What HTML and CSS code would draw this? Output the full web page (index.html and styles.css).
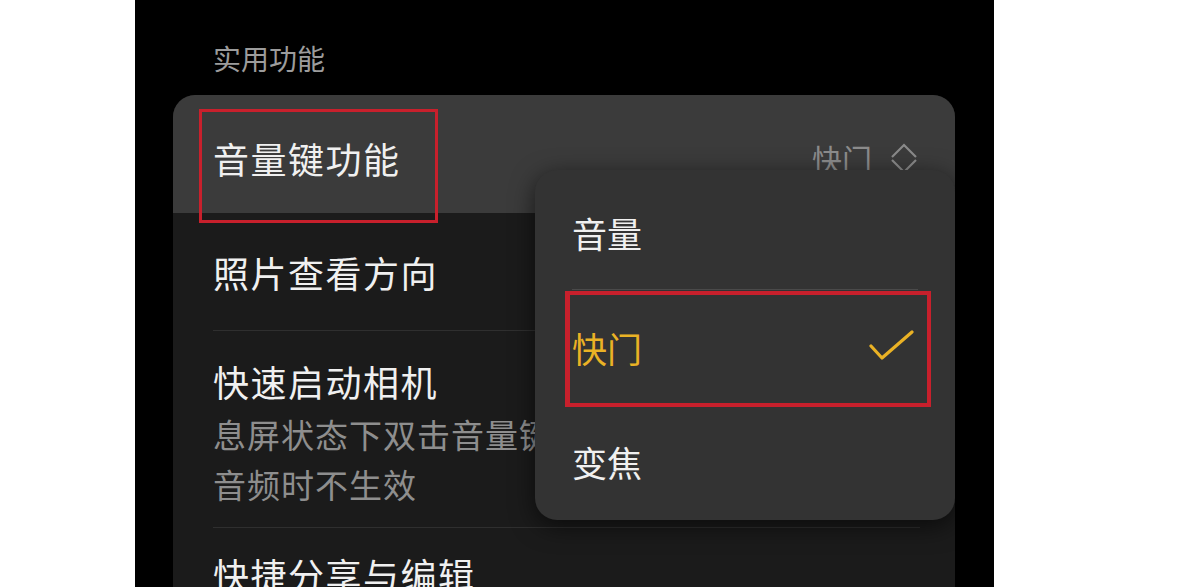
FILE: index.html
```html
<!DOCTYPE html>
<html lang="zh-CN">
<head>
<meta charset="utf-8">
<link rel="stylesheet" href="styles.css">
</head>
<body>
<div class="phone">
  <div class="section-title">实用功能</div>
  <div class="card">
    <div class="row row-active">
      <span class="row-title">音量键功能</span>
      <span class="row-value">快门
        <svg class="updown" viewBox="0 0 28 32" width="28" height="32"><path d="M2 15 L14 3 L26 15" /><path d="M2 18 L14 30 L26 18" /></svg>
      </span>
    </div>
    <div class="row row-plain">
      <span class="row-title">照片查看方向</span>
    </div>
    <div class="divider"></div>
    <div class="row row-multi">
      <div class="row-title">快速启动相机</div>
      <div class="row-sub"><span class="sub-line clipped">息屏状态下双击音量键快速启动相机，播放</span><span class="sub-line">音频时不生效</span></div>
    </div>
    <div class="divider"></div>
    <div class="row row-last">
      <span class="row-title">快捷分享与编辑</span>
    </div>
  </div>

  <div class="menu">
    <div class="menu-item">音量</div>
    <div class="menu-divider"></div>
    <div class="menu-item selected">快门
      <svg class="check" viewBox="0 0 46 34" width="46" height="34"><path d="M2 16 L13 28 L43 2" /></svg>
    </div>
    <div class="menu-item">变焦</div>
  </div>

  <div class="mark mark-1"></div>
  <div class="mark mark-2"></div>
</div>
</body>
</html>
```

FILE: styles.css
```css
html, body {
  margin: 0;
  padding: 0;
  background: #ffffff;
}
body {
  font-family: "Noto Sans CJK SC", "Noto Sans", sans-serif;
  width: 1200px;
  height: 587px;
  overflow: hidden;
}
.phone {
  position: relative;
  margin-left: 135px;
  width: 859px;
  height: 587px;
  background: #000;
  overflow: hidden;
}
.section-title {
  padding: 44px 0 0 78px;
  height: 51px;
  font-size: 28px;
  line-height: 28px;
  color: #9c9c9c;
}
.card {
  margin: 0 39px 0 38px;
  background: #1b1b1b;
  border-radius: 22px 22px 0 0;
  overflow: hidden;
  height: 600px;
}
.row {
  display: flex;
  align-items: center;
  padding: 0 37px 0 40px;
  color: #f0f0f0;
}
.row-title {
  font-size: 36px;
  line-height: 48px;
  letter-spacing: 1.5px;
}
.row-active {
  height: 118px;
  box-sizing: border-box;
  padding-top: 8px;
  background: #3b3b3b;
  justify-content: space-between;
}
.row-value {
  display: flex;
  align-items: center;
  gap: 18px;
  font-size: 30px;
  color: #8c8c8c;
}
.updown {
  fill: none;
  stroke: #8a8a8a;
  stroke-width: 2.2;
}
.row-plain {
  height: 117px;
}
.divider {
  height: 1px;
  background: #2f2f2f;
  margin: 0 35px 0 40px;
}
.row-multi {
  display: block;
  padding-top: 26px;
  padding-bottom: 18px;
}
.row-sub {
  margin-top: 4px;
  font-size: 33px;
  line-height: 50px;
  color: #8e8e8e;
  letter-spacing: 1px;
}
.sub-line {
  display: block;
  white-space: nowrap;
}
.sub-line.clipped {
  width: 322px;
  overflow: hidden;
}
.row-last {
  padding-top: 22px;
}
.menu {
  position: absolute;
  left: 400px;
  top: 170px;
  width: 420px;
  height: 350px;
  box-sizing: border-box;
  padding-top: 5px;
  background: #333333;
  border-radius: 22px;
  box-shadow: 0 6px 24px rgba(0, 0, 0, 0.6);
}
.menu-item {
  height: 114px;
  display: flex;
  align-items: center;
  justify-content: space-between;
  padding: 0 40px 0 37px;
  font-size: 35px;
  color: #f0f0f0;
}
.menu-item.selected {
  color: #eab225;
}
.menu-divider {
  height: 1px;
  margin: 0 37px;
  background: #4a4a4a;
}
.check {
  fill: none;
  stroke: #eab225;
  stroke-width: 3.2;
  stroke-linecap: round;
  stroke-linejoin: round;
}
.mark {
  position: absolute;
  box-sizing: border-box;
  border: 3px solid #c8202c;
}
.mark-1 {
  left: 64px;
  top: 109px;
  width: 239px;
  height: 114px;
}
.mark-2 {
  left: 430px;
  top: 291px;
  width: 366px;
  height: 116px;
  border-width: 4px 4px 4px 5px;
}
```
